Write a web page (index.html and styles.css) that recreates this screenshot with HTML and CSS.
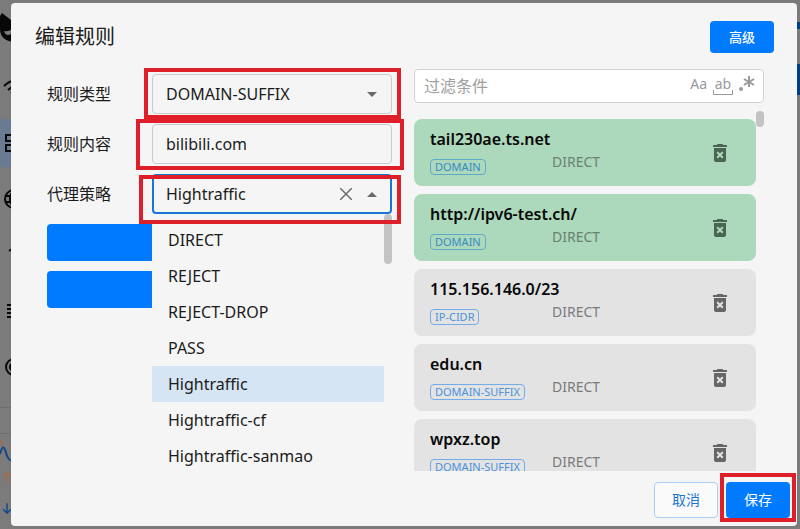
FILE: index.html
```html
<!DOCTYPE html>
<html lang="zh-CN">
<head>
<meta charset="utf-8">
<meta name="viewport" content="width=device-width, initial-scale=1">
<title>编辑规则</title>
<link rel="stylesheet" href="styles.css">
</head>
<body>
<svg class="defs" aria-hidden="true">
  <symbol id="trash" viewBox="0 0 24 24"><path d="M6 19c0 1.100.9 2 2 2h8c1.100 0 2-.9 2-2V7H6v12zm2.460-7.120 1.410-1.410L12 12.590l2.120-2.120 1.410 1.410L13.410 14l2.120 2.120-1.410 1.410L12 15.410l-2.120 2.120-1.410-1.410L10.590 14l-2.130-2.120zM15.500 4l-1-1h-5l-1 1H5v2h14V4z"/></symbol>
</svg>

<div class="backdrop" aria-hidden="true">
  <svg class="logo" viewBox="0 0 30 32"><path d="M2 1 11 8H20L29 1V20C29 27 22 30 15 30 6 30 0 25 0 17V4Z"/><path class="cut" d="M4 19q5 1 8-2 0 6-4 6-3 0-4-4Z"/></svg>
  <div class="nav">
    <div class="nav-item"><svg viewBox="0 0 24 24"><path class="line" d="M2 11Q12 1 22 11M6 15q6-6 12 0M9 18q3-3 6 0"/></svg></div>
    <div class="nav-item active"><svg viewBox="0 0 24 24"><path class="line" d="M4 4h6v6H4ZM14 4h6v6h-6ZM4 14h6v6H4ZM14 14h6v6h-6Z"/></svg></div>
    <div class="nav-item"><svg viewBox="0 0 24 24"><path class="line" d="M12 3a9 9 0 1 0 0 18 9 9 0 0 0 0-18ZM4 9h16M4 15h16M12 3q-8 9 0 18M12 3q8 9 0 18"/></svg></div>
    <div class="nav-item"><svg viewBox="0 0 24 24"><path class="line" d="M7 8l7-5v15"/></svg></div>
    <div class="nav-item"><svg viewBox="0 0 24 24"><path class="line" d="M5 6h15M5 10h15M5 14h15M5 18h15"/></svg></div>
    <div class="nav-item"><svg viewBox="0 0 24 24"><path class="line" d="M12 4a8 8 0 1 0 0 16 8 8 0 0 0 0-16ZM12 8a4 4 0 1 0 0 8 4 4 0 0 0 0-8Z"/></svg></div>
  </div>
  <div class="traffic">
    <svg viewBox="0 0 20 92"><path class="orange" d="M0 6Q3 15 7 22"/><path class="graph" d="M0 20Q3 8 6 19T16 26"/><path class="orange" d="M7 49V39M3 43l4-4 4 4"/><path class="blue" d="M7 70v10M3 76l4 4 4-4"/></svg>
  </div>
  <div class="edge edge-small"></div>
  <div class="edge edge-large"></div>
</div>

<main class="dialog" role="dialog" aria-labelledby="title">
  <header class="head">
    <h1 id="title">编辑规则</h1>
    <button class="btn primary small" type="button">高级</button>
  </header>

  <div class="content">
    <form class="form">
      <div class="row">
        <label for="type">规则类型</label>
        <div class="field">
          <select id="type"><option>DOMAIN-SUFFIX</option></select>
          <svg class="caret" viewBox="0 0 10 5"><path d="M0 0h10L5 5Z"/></svg>
          <span class="mark mark-type"></span>
        </div>
      </div>
      <div class="row">
        <label for="value">规则内容</label>
        <div class="field">
          <input id="value" type="text" value="bilibili.com">
          <span class="mark mark-value"></span>
        </div>
      </div>
      <div class="row">
        <label for="policy">代理策略</label>
        <div class="field open">
          <input id="policy" type="text" value="Hightraffic" role="combobox" aria-expanded="true" aria-controls="policies">
          <button class="clear" type="button" aria-label="清除"><svg viewBox="0 0 12 12"><path d="M0 0l12 12M12 0 0 12"/></svg></button>
          <svg class="caret" viewBox="0 0 10 5"><path d="M0 5h10L5 0Z"/></svg>
          <ul class="menu" id="policies" role="listbox">
            <li role="option">DIRECT</li>
            <li role="option">REJECT</li>
            <li role="option">REJECT-DROP</li>
            <li role="option">PASS</li>
            <li role="option" class="selected" aria-selected="true">Hightraffic</li>
            <li role="option">Hightraffic-cf</li>
            <li role="option">Hightraffic-sanmao</li>
          </ul>
          <span class="thumb menu-thumb"></span>
          <span class="mark mark-policy"></span>
        </div>
      </div>
      <button class="btn primary wide" type="button"></button>
      <button class="btn primary wide" type="button"></button>
    </form>

    <section class="rules">
      <div class="filter">
        <input type="text" placeholder="过滤条件" aria-label="过滤条件">
        <button type="button" class="case">Aa</button>
        <button type="button" class="word">ab</button>
        <button type="button" class="regex" aria-label="正则"><svg viewBox="0 0 16 16"><path d="M10 0v11M5 3l10 6M15 3 5 9"/><circle cx="2" cy="13" r="2"/></svg></button>
      </div>
      <div class="scroller">
        <div class="list">
          <article class="card added"><div class="info"><h2>tail230ae.ts.net</h2><div class="meta"><span class="cell"><span class="tag">DOMAIN</span></span><span class="policy">DIRECT</span></div></div><button type="button" class="delete" aria-label="删除"><svg><use href="#trash"/></svg></button></article>
          <article class="card added"><div class="info"><h2>http://ipv6-test.ch/</h2><div class="meta"><span class="cell"><span class="tag">DOMAIN</span></span><span class="policy">DIRECT</span></div></div><button type="button" class="delete" aria-label="删除"><svg><use href="#trash"/></svg></button></article>
          <article class="card"><div class="info"><h2>115.156.146.0/23</h2><div class="meta"><span class="cell"><span class="tag">IP-CIDR</span></span><span class="policy">DIRECT</span></div></div><button type="button" class="delete" aria-label="删除"><svg><use href="#trash"/></svg></button></article>
          <article class="card"><div class="info"><h2>edu.cn</h2><div class="meta"><span class="cell"><span class="tag">DOMAIN-SUFFIX</span></span><span class="policy">DIRECT</span></div></div><button type="button" class="delete" aria-label="删除"><svg><use href="#trash"/></svg></button></article>
          <article class="card"><div class="info"><h2>wpxz.top</h2><div class="meta"><span class="cell"><span class="tag">DOMAIN-SUFFIX</span></span><span class="policy">DIRECT</span></div></div><button type="button" class="delete" aria-label="删除"><svg><use href="#trash"/></svg></button></article>
        </div>
        <span class="thumb list-thumb"></span>
      </div>
    </section>
  </div>

  <footer class="foot">
    <button class="btn outline" type="button">取消</button>
    <span class="save"><button class="btn primary" type="button">保存</button><span class="mark mark-save"></span></span>
  </footer>
</main>
</body>
</html>
```
FILE: styles.css
```css
* { box-sizing: border-box; }

body {
  margin: 0;
  height: 100vh;
  overflow: hidden;
  background: #7b7b7b;
  color: #1b1b1b;
  font: 16px/24px "Noto Sans", "Noto Sans CJK SC", sans-serif;
}

button, input, select { font: inherit; color: inherit; margin: 0; }
button { border: 0; padding: 0; background: none; }

.defs { position: absolute; width: 0; height: 0; }

/* Dimmed application window behind the dialog */
.backdrop { position: absolute; inset: 0; display: flex; flex-direction: column; align-items: flex-start; }
.logo { width: 30px; height: 32px; margin: 12px 0 19px; fill: #080808; }
.logo .cut { fill: #7b7b7b; }
.nav { display: flex; flex-direction: column; gap: 8px; width: 100px; }
.nav-item { height: 48px; padding: 12px 2px; }
.nav-item.active { background: #6b7a93; }
.nav-item svg { display: block; width: 24px; height: 24px; }
.line { fill: none; stroke: #080808; stroke-width: 2; }
.traffic { width: 100px; margin-top: 16px; padding-top: 25px; border-top: 1px solid #6e6e6e; }
.traffic svg { display: block; width: 20px; height: 92px; border-top: 1px solid #6e6e6e; }
.orange, .blue, .graph { fill: none; stroke-width: 1.500; }
.orange { stroke: #a5694f; }
.blue { stroke: #104a8c; }
.graph { stroke: #104a8c; stroke-width: 2; }
.edge { position: absolute; right: 0; width: 4px; background: #003f86; }
.edge-small { top: 22px; height: 7px; }
.edge-large { top: 64px; height: 31px; }

.dialog {
  position: relative;
  display: flex;
  flex-direction: column;
  height: calc(100vh - 6px);
  margin: 3px 3px 3px 11px;
  background: #f5f5f5;
  border-radius: 4px;
}

.head { display: flex; align-items: center; justify-content: space-between; padding: 15px 23px 13px 24px; height: 66px; }
h1 { margin: 0; font-size: 20px; line-height: 32px; font-weight: 400; }

.btn { width: 64px; height: 36px; border-radius: 4px; font-size: 14px; line-height: 20px; }
.btn.primary { background: #007aff; color: #fff; }
.btn.small { height: 32px; font-size: 13px; font-weight: 500; }
.btn.outline { background: #fafafa; border: 1px solid #a8cdf2; color: #1976d2; }
.btn.wide { width: auto; height: 37px; }

.content { flex: 1; min-height: 0; display: grid; grid-template-columns: 357fr 350fr; gap: 22px; padding: 0 33px 0 24px; }

.form { display: flex; flex-direction: column; gap: 10px; padding: 5px 0 0 12px; }
.row { display: flex; align-items: center; height: 40px; }
.row label { width: 105px; }
.field { position: relative; flex: 1; height: 40px; }
.field input, .field select {
  appearance: none;
  width: 100%;
  height: 40px;
  padding: 0 13px;
  border: 1px solid #cacaca;
  border-radius: 4px;
  background: transparent;
  outline: none;
}
.field.open input { padding: 0 12px; border: 2px solid #1976d2; }
.caret { position: absolute; right: 15px; top: 18px; width: 10px; height: 5px; fill: #6b6b6b; }
.clear { position: absolute; right: 40px; top: 14px; width: 12px; height: 12px; }
.clear svg { display: block; stroke: #6b6b6b; stroke-width: 1.500; }

.menu {
  position: absolute;
  top: 40px;
  left: 0;
  right: 0;
  height: 252px;
  margin: 0;
  padding: 8px 8px 0 0;
  overflow: hidden;
  list-style: none;
  background: #f5f5f5;
}
.menu li { height: 36px; padding: 6px 16px; }
.menu .selected { background: #d6e5f4; }

.thumb { position: absolute; right: 0; width: 8px; border-radius: 4px; background: #c3c3c3; }
.menu-thumb { top: 40px; height: 50px; }
.list-thumb { top: 8px; height: 16px; }

/* Highlight frames */
.mark { position: absolute; border: 4px solid #de1f2a; pointer-events: none; }
.mark-type { inset: -6px -9px -5px -8px; }
.mark-value { inset: -5px -12px -6px -16px; }
.mark-policy { inset: 1px -9px -10px -13px; }
.mark-save { inset: -9px -6px -4px -6px; }

.rules { display: flex; flex-direction: column; min-width: 0; min-height: 0; }
.filter {
  flex: none;
  display: flex;
  align-items: center;
  gap: 6px;
  height: 34px;
  padding: 0 8px 0 9px;
  border: 1px solid #d2d2d2;
  border-radius: 4px;
  background: #fff;
  color: #9a9a9a;
}
.filter input { flex: 1; min-width: 0; padding: 0; border: 0; background: none; outline: none; }
.filter input::placeholder { color: #a0a0a0; opacity: 1; }
.filter button { font-size: 14px; line-height: 14px; padding-bottom: 4px; }
.word { position: relative; width: 20px; }
.word::after { content: ""; position: absolute; left: 0; right: 0; bottom: 0; height: 4px; border: 1px solid #9a9a9a; border-top: 0; }
.regex svg { display: block; width: 16px; height: 16px; stroke: #9a9a9a; stroke-width: 2; }
.regex circle { fill: #9a9a9a; stroke: none; }

.scroller { position: relative; flex: 1; min-height: 0; overflow: hidden; }
.list { display: flex; flex-direction: column; gap: 8px; padding: 16px 8px 0 0; }
.card { flex: none; display: flex; align-items: center; height: 67px; padding: 0 24px 0 16px; border-radius: 8px; background: #e3e3e3; }
.card.added { background: #acd8bb; }
.info { flex: 1; height: 51px; }
h2 { margin: 0; font-size: 16px; line-height: 24px; font-weight: 600; color: #080808; }
.meta { display: flex; align-items: flex-start; padding-top: 2px; }
.cell { display: flex; width: 122px; padding-top: 6px; }
.tag { padding: 0 4px; border: 1px solid #76abea; border-radius: 4px; color: #4b92dc; font-size: 11px; line-height: 14px; }
.policy { font-size: 14px; line-height: 18px; color: #7b7b7b; }
.added .tag { border-color: #60aac9; color: #378bc5; }
.added .policy { color: #688371; }
.delete { width: 24px; height: 24px; }
.delete svg { display: block; width: 24px; height: 24px; fill: #666; }
.added .delete svg { fill: #4a6652; }

.foot { display: flex; justify-content: flex-end; gap: 8px; padding: 11px 7px 8px; }
.save { position: relative; display: flex; }
```
